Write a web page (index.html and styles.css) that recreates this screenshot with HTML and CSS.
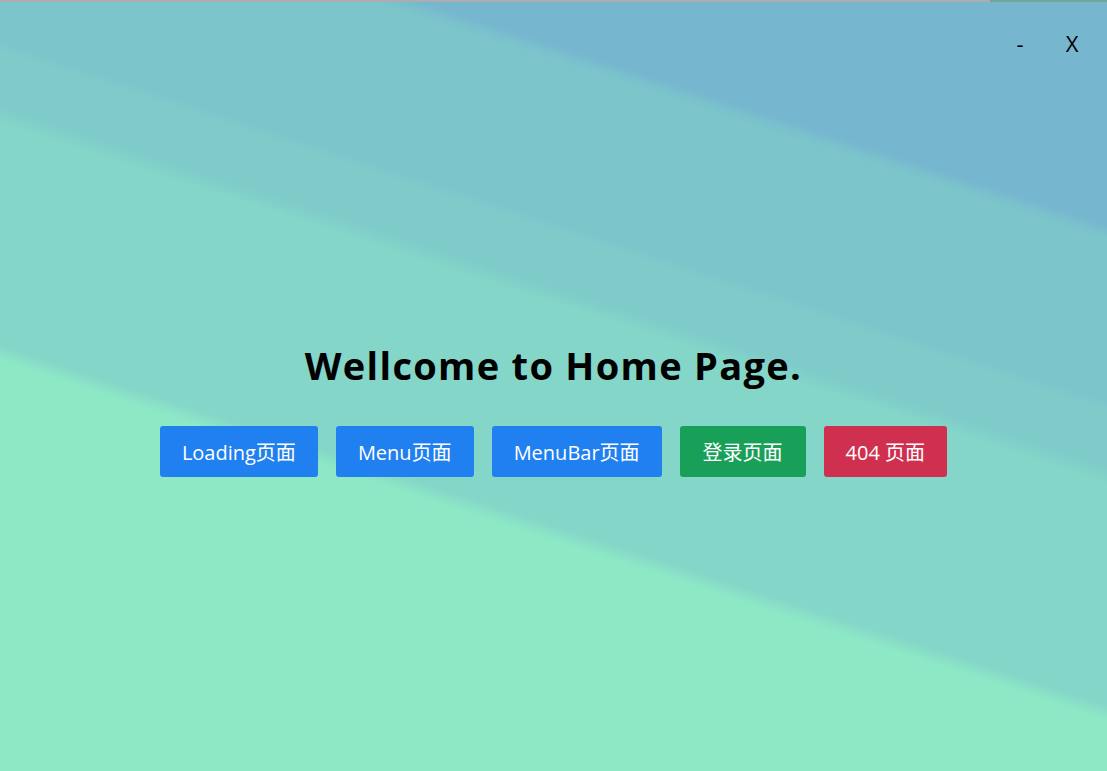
FILE: index.html
```html
<!DOCTYPE html>
<html lang="zh-CN">
<head>
<meta charset="utf-8">
<title>Home</title>
<link rel="stylesheet" href="styles.css">
</head>
<body>
<div class="app">
  <div class="topline"><span class="topline-main"></span><span class="topline-end"></span></div>
  <div class="titlebar">
    <button class="win-btn">-</button>
    <button class="win-btn">X</button>
  </div>
  <main class="home">
    <h1 class="title">Wellcome to Home Page.</h1>
    <div class="actions">
      <button class="btn btn-info">Loading页面</button>
      <button class="btn btn-info">Menu页面</button>
      <button class="btn btn-info">MenuBar页面</button>
      <button class="btn btn-success">登录页面</button>
      <button class="btn btn-error">404 页面</button>
    </div>
  </main>
</div>
</body>
</html>
```
FILE: styles.css
```css
html, body {
  margin: 0;
  padding: 0;
  height: 100%;
}
body {
  font-family: "Open Sans", "Noto Sans CJK SC", sans-serif;
  overflow: hidden;
}
.app {
  height: 100vh;
  display: flex;
  flex-direction: column;
  background: linear-gradient(198deg,
    #76b7cf 0%, #76b7cf 19.8%,
    #7cc5cb 21.2%, #7cc5cb 35.2%,
    #7fcbca 36.6%, #7fcbca 41.3%,
    #84d6c8 42.7%, #84d6c8 62.3%,
    #8de8c6 63.7%, #8de8c6 100%);
}
.topline {
  display: flex;
  height: 2px;
  flex: none;
}
.topline-main {
  flex: 1;
  background: #abadb0;
}
.topline-end {
  width: 117px;
  background: #74a793;
}
.titlebar {
  display: flex;
  justify-content: flex-end;
  padding: 26px 9px 0 0;
}
.win-btn {
  width: 52px;
  height: 30px;
  padding: 0;
  border: 0;
  background: transparent;
  font-family: "Open Sans", sans-serif;
  font-size: 22px;
  line-height: 30px;
  color: #000;
  cursor: pointer;
}
.home {
  display: flex;
  flex-direction: column;
  align-items: center;
  padding-top: 282px;
}
.title {
  margin: 0;
  font-size: 38px;
  letter-spacing: 1.3px;
  line-height: 50px;
  font-weight: 700;
  color: #000;
}
.actions {
  display: flex;
  gap: 18px;
  margin-top: 36px;
}
.btn {
  height: 51px;
  padding: 0 22px;
  border: 0;
  border-radius: 3px;
  color: #fff;
  font-family: "Open Sans", "Noto Sans CJK SC", sans-serif;
  font-size: 20px;
  cursor: pointer;
}
.btn-info { background: #2080f0; }
.btn-success { background: #18a058; padding: 0 23px; }
.btn-error { background: #d03050; }
```
